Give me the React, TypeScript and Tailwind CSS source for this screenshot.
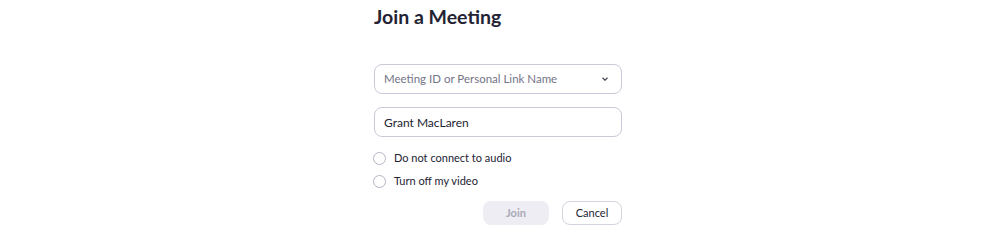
import { useState } from 'react'

export default function App() {
  const [audioOff, setAudioOff] = useState(false)
  const [videoOff, setVideoOff] = useState(false)
  const [name, setName] = useState('Grant MacLaren')

  return (
    <div className="h-[236px] w-full bg-white font-['Lato','Open_Sans',sans-serif] text-[#232333]">
      <div className="mx-auto w-[252px] pt-[5px]">
        <h1 className="text-[19.5px] font-bold leading-[24px] text-[#232333]">Join a Meeting</h1>

        {/* Meeting ID */}
        <div className="mt-[35px] flex h-[30px] w-[248px] items-center justify-between rounded-[8px] border border-[#c9c9d9] px-[9px]">
          <span className="text-[11.5px] text-[#747487]">Meeting ID or Personal Link Name</span>
          <svg width="6" height="4" viewBox="0 0 6 4" className="mr-[4px]">
            <path d="M0.5 0.8 L3 3.2 L5.5 0.8" fill="none" stroke="#4a4a5a" strokeWidth="1.3" />
          </svg>
        </div>

        {/* Name */}
        <input
          value={name}
          onChange={(e) => setName(e.target.value)}
          className="mt-[13px] block h-[30px] w-[248px] rounded-[8px] border border-[#c9c9d9] px-[9px] text-[12px] text-[#232333] outline-none"
        />

        {/* Options */}
        <div className="mt-[15px] flex flex-col gap-[10px]">
          <label className="-ml-[1px] flex h-[13px] cursor-pointer items-center gap-[8px]">
            <button
              type="button"
              onClick={() => setAudioOff(!audioOff)}
              className="h-[13px] w-[13px] rounded-full border border-[#b5b5c5] bg-white"
            />
            <span className="text-[11px] text-[#232333]">Do not connect to audio</span>
          </label>
          <label className="-ml-[1px] flex h-[13px] cursor-pointer items-center gap-[8px]">
            <button
              type="button"
              onClick={() => setVideoOff(!videoOff)}
              className="h-[13px] w-[13px] rounded-full border border-[#b5b5c5] bg-white"
            />
            <span className="text-[11px] text-[#232333]">Turn off my video</span>
          </label>
        </div>

        {/* Actions */}
        <div className="mt-[13px] flex w-[248px] justify-end gap-[13px]">
          <button
            type="button"
            disabled
            className="h-[24px] w-[66px] rounded-[8px] bg-[#ededf3] text-[11px] font-bold text-[#a9a9b8]"
          >
            Join
          </button>
          <button
            type="button"
            className="h-[24px] w-[60px] rounded-[8px] border border-[#d4d4de] bg-white text-[11px] text-[#232333]"
          >
            Cancel
          </button>
        </div>
      </div>
    </div>
  )
}
